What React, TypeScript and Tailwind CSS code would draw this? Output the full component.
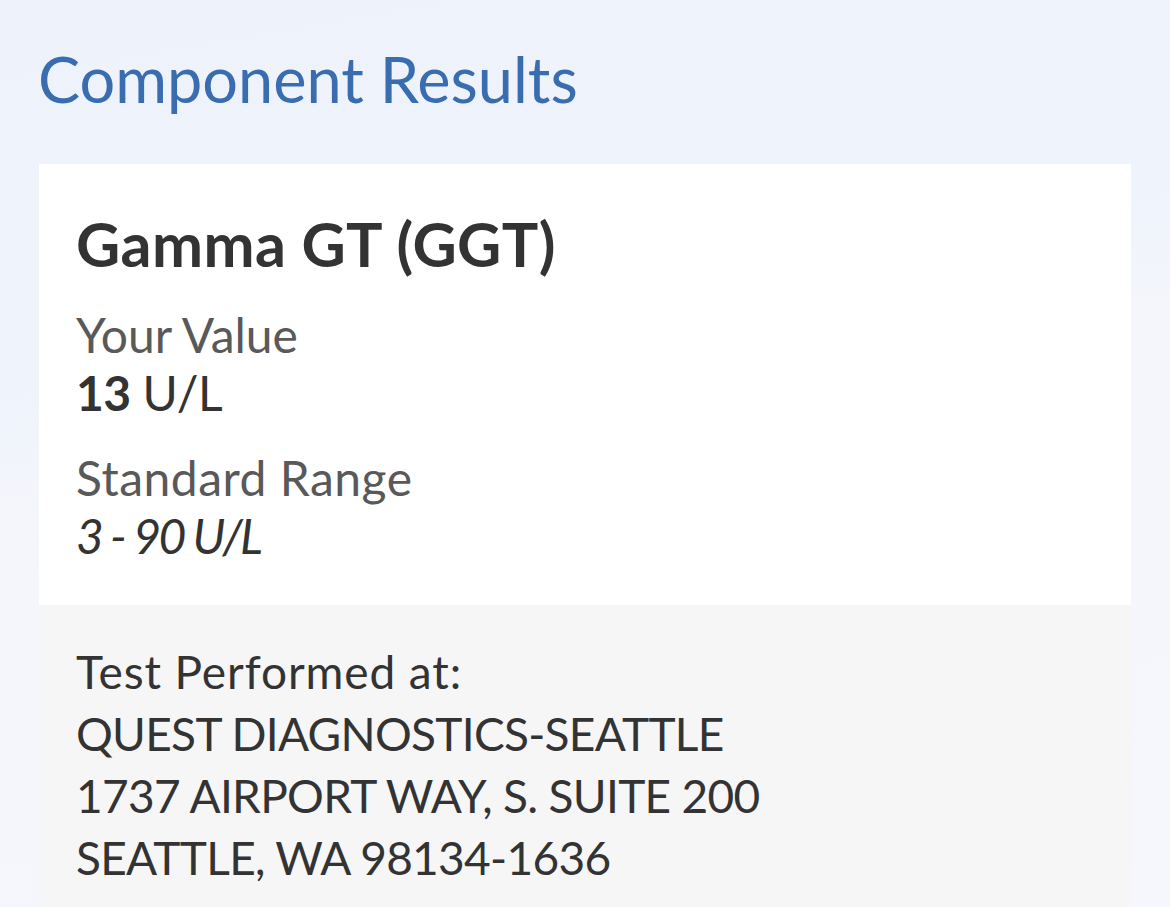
import React from "react";

const font = { fontFamily: "'Source Sans Pro', Lato, 'Noto Sans', sans-serif" };

const ComponentResults = () => {
  return (
    <div
      className="min-h-screen bg-[linear-gradient(170deg,#eef3fb_0%,#eff3fb_35%,#f4f6fb_45%,#f5f7fb_100%)] px-[39px] pt-[42px] overflow-hidden"
      style={font}
    >
      <h1 className="text-[63px] leading-[74px] font-normal text-[#3a6db0] -ml-[1px]">
        Component Results
      </h1>
      <div className="mt-[48px] w-[1092px]">
        <div className="bg-white px-[37px] pt-[43px] pb-[40px]">
          <h2 className="text-[61px] leading-[73px] font-bold text-[#333333] tracking-[0.4px]">
            Gamma GT (GGT)
          </h2>
          <div className="mt-[26px] text-[48px] leading-[58px]">
            <p className="text-[#595959]">Your Value</p>
            <p className="text-[#333333] tracking-[-0.5px]">
              <span className="font-bold">13</span> U/L
            </p>
          </div>
          <div className="mt-[27px] text-[48px] leading-[58px]">
            <p className="text-[#595959] tracking-[0.5px]">Standard Range</p>
            <p className="italic text-[#333333] tracking-[-2.5px]">3 - 90 U/L</p>
          </div>
        </div>
        <div className="bg-[#f6f6f7] px-[37px] pt-[36px] pb-[40px] text-[46px] leading-[62px] text-[#333333] tracking-[-0.7px]">
          <p className="tracking-[0.9px]">Test Performed at:</p>
          <p>QUEST DIAGNOSTICS-SEATTLE</p>
          <p>1737 AIRPORT WAY, S. SUITE 200</p>
          <p>SEATTLE, WA 98134-1636</p>
        </div>
      </div>
    </div>
  );
};

export default function App() {
  return <ComponentResults />;
}
